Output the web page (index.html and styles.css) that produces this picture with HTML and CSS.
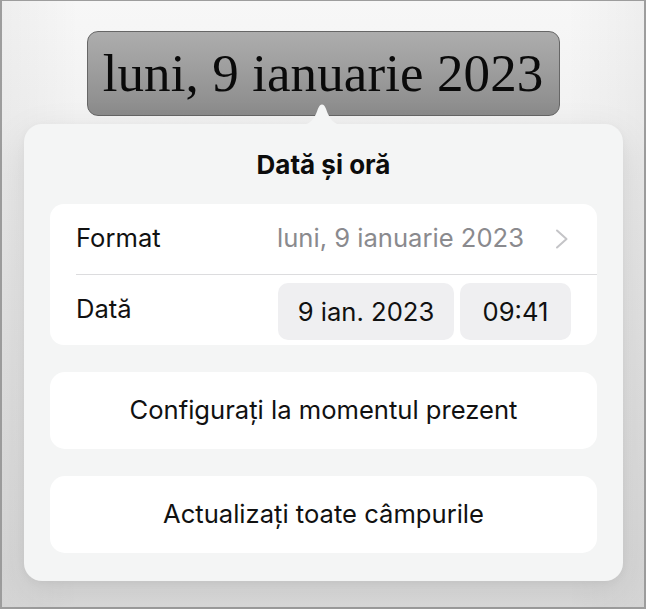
FILE: index.html
```
<!DOCTYPE html>
<html lang="ro">
<head>
<meta charset="utf-8">
<link rel="stylesheet" href="styles.css">
</head>
<body>
<div class="frame">
  <div class="field">luni, 9 ianuarie 2023</div>
  <div class="popover">
    <svg class="arrow" width="46" height="22" viewBox="0 0 46 22"><path d="M0 22 C9 22 13 19 17 11 C19 6 20 1.5 23 1.5 C26 1.5 27 6 29 11 C33 19 37 22 46 22 Z" fill="#f4f5f5"/></svg>
    <div class="title">Dată și oră</div>
    <div class="group">
      <div class="row">
        <span class="label">Format</span>
        <span class="value">luni, 9 ianuarie 2023</span>
        <svg class="chev" width="14" height="20" viewBox="0 0 14 20"><path d="M2 1.5 L11.5 10 L2 18.5" fill="none" stroke="#c4c4c7" stroke-width="2" stroke-linecap="round" stroke-linejoin="round"/></svg>
      </div>
      <div class="row row2">
        <span class="label">Dată</span>
        <span class="chip chip-date">9 ian. 2023</span>
        <span class="chip chip-time">09:41</span>
      </div>
    </div>
    <div class="button">Configurați la momentul prezent</div>
    <div class="button">Actualizați toate câmpurile</div>
  </div>
</div>
</body>
</html>
```
FILE: styles.css
```
* { box-sizing: border-box; }
html, body { margin: 0; padding: 0; }
body {
  width: 646px;
  height: 609px;
  overflow: hidden;
  font-family: Inter, Roboto, "Noto Sans", sans-serif;
}
.frame {
  width: 646px;
  height: 609px;
  border: 2px solid #9d9d9d;
  border-top-width: 1px;
  background:
    linear-gradient(90deg, rgba(0,0,0,0.035) 0%, rgba(0,0,0,0) 12%, rgba(0,0,0,0) 88%, rgba(0,0,0,0.035) 100%),
    linear-gradient(#f7f7f7 0%, #efefef 30%, #e4e4e4 70%, #dcdcdc 100%);
  display: flex;
  flex-direction: column;
  align-items: center;
}
.field {
  margin-top: 30px;
  width: 473px;
  height: 85px;
  border: 1.5px solid #666;
  border-radius: 11px;
  background: linear-gradient(#adadad, #8b8b8b);
  font-family: "Liberation Serif", "Times New Roman", serif;
  font-size: 53px;
  color: #0a0a0a;
  display: flex;
  align-items: center;
  justify-content: center;
  padding-bottom: 2px;
  letter-spacing: 0.1px;
}
.popover {
  position: relative;
  margin-top: 8px;
  margin-left: 1px;
  width: 599px;
  height: 457px;
  border-radius: 18px;
  background: #f4f5f5;
  box-shadow: 0 14px 40px rgba(0,0,0,0.10), 0 2px 8px rgba(0,0,0,0.04);
  padding: 26px 26px 28px;
  display: flex;
  flex-direction: column;
}
.arrow {
  position: absolute;
  left: 275px;
  top: -21px;
}
.title {
  height: 30px;
  line-height: 30px;
  text-align: center;
  font-weight: 700;
  font-size: 26px;
  color: #0c0c0c;
  margin-bottom: 24px;
}
.group {
  background: #fff;
  border-radius: 14px;
  padding-left: 26px;
}
.row {
  height: 70px;
  display: flex;
  align-items: center;
  padding-right: 28px;
  font-size: 25.6px;
  color: #111;
}
.row2 {
  height: 71px;
  border-top: 1px solid #dcdcde;
  padding-right: 26px;
}
.label { flex: 1; padding-bottom: 3px; }
.value { color: #8a8a8e; margin-right: 31px; padding-bottom: 3px; }
.chev { display: block; }
.chip {
  height: 57px;
  display: flex;
  align-items: center;
  justify-content: center;
  background: #efeff1;
  border-radius: 10px;
  color: #111;
  margin-top: 2px;
}
.chip-date { width: 176px; margin-right: 6px; }
.chip-time { width: 111px; }
.button {
  margin-top: 27px;
  height: 77px;
  background: #fff;
  border-radius: 15px;
  display: flex;
  align-items: center;
  justify-content: center;
  font-size: 25.6px;
  color: #111;
  padding-bottom: 2px;
}
```
